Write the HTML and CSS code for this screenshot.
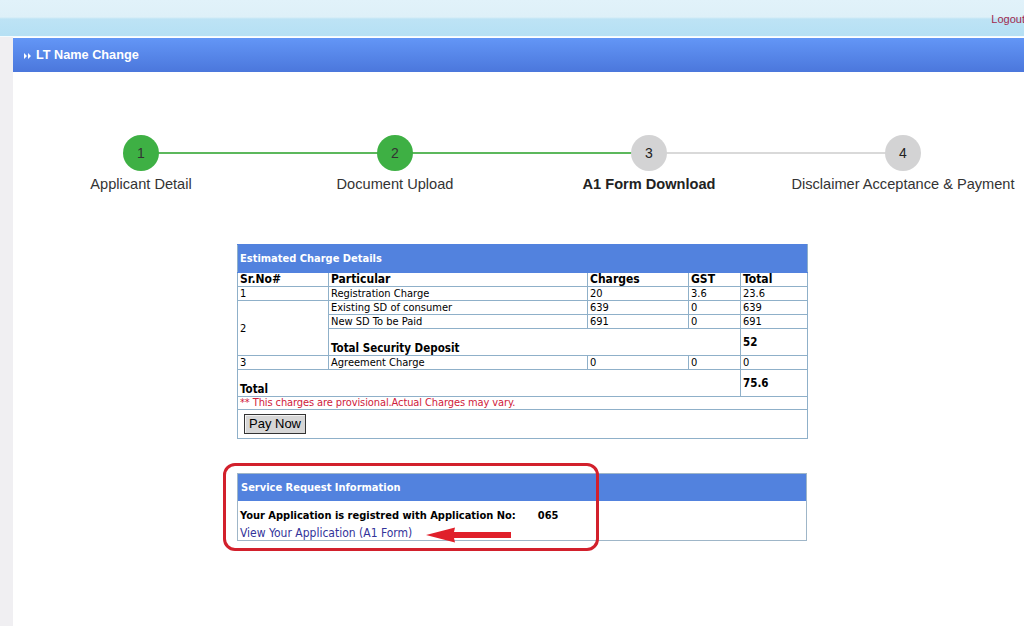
FILE: index.html
```html
<!DOCTYPE html>
<html>
<head>
<meta charset="utf-8">
<link rel="stylesheet" href="styles.css">
</head>
<body>
<div class="topbar"><a class="logout" href="#">Logout</a></div>
<div class="main">
  <div class="sidebar"></div>
  <div class="content">
    <div class="pagehead">
      <svg class="dbl" width="7" height="6" viewBox="0 0 7 6"><path d="M0 0 L3 3 L0 6 Z M4 0 L7 3 L4 6 Z" fill="#fff"/></svg>
      <span>LT Name Change</span>
    </div>
    <div class="stepper">
      <div class="step done line-green"><div class="circle">1</div><div class="label">Applicant Detail</div></div>
      <div class="step done line-green"><div class="circle">2</div><div class="label">Document Upload</div></div>
      <div class="step todo line-gray"><div class="circle">3</div><div class="label current">A1 Form Download</div></div>
      <div class="step todo"><div class="circle">4</div><div class="label">Disclaimer Acceptance &amp; Payment</div></div>
    </div>

    <table class="charges">
      <colgroup><col class="c1"><col class="c2"><col class="c3"><col class="c4"><col class="c5"></colgroup>
      <tr class="cap"><th colspan="5">Estimated Charge Details</th></tr>
      <tr class="hd"><th>Sr.No#</th><th>Particular</th><th>Charges</th><th>GST</th><th>Total</th></tr>
      <tr><td>1</td><td>Registration Charge</td><td>20</td><td>3.6</td><td>23.6</td></tr>
      <tr><td rowspan="3" class="mid">2</td><td>Existing SD of consumer</td><td>639</td><td>0</td><td>639</td></tr>
      <tr><td>New SD To be Paid</td><td>691</td><td>0</td><td>691</td></tr>
      <tr class="tall"><td colspan="3" class="bot"><b>Total Security Deposit</b></td><td class="mid"><b>52</b></td></tr>
      <tr><td>3</td><td>Agreement Charge</td><td>0</td><td>0</td><td>0</td></tr>
      <tr class="tall"><td colspan="4" class="bot"><b>Total</b></td><td class="mid"><b>75.6</b></td></tr>
      <tr><td colspan="5" class="note">** This charges are provisional.Actual Charges may vary.</td></tr>
      <tr class="btnrow"><td colspan="5"><button class="pay">Pay Now</button></td></tr>
    </table>

    <div class="srwrap">
      <div class="srpanel">
        <div class="srhead">Service Request Information</div>
        <div class="srbody">
          <div class="srline"><b>Your Application is registred with Application No:</b><b class="appno">065</b></div>
          <a class="viewlink" href="#">View Your Application (A1 Form)</a>
        </div>
      </div>
      <div class="highlight"></div>
      <svg class="arrow" width="88" height="18" viewBox="0 0 88 18"><path d="M1 9 L30 1.5 L29 6 L86 6 L86 12 L29 12 L30 16.5 Z" fill="#e0202a"/></svg>
    </div>
  </div>
</div>
</body>
</html>
```

FILE: styles.css
```css
html, body { margin: 0; padding: 0; background: #fff; }
body { font-family: "Liberation Sans", Arial, sans-serif; width: 1024px; height: 626px; overflow: hidden; }

.topbar {
  height: 36px;
  background: linear-gradient(#e1f2fa 0, #def0f8 17px, #bde3f5 19px, #b6e0f4 35px);
  border-bottom: 1px solid #f4fbfe;
  display: flex;
  justify-content: flex-end;
  align-items: flex-start;
}
.logout {
  color: #a2294d;
  font-size: 11px;
  text-decoration: none;
  margin-top: 13px;
  margin-right: -1px;
}

.main { display: flex; height: 589px; }
.sidebar { width: 13px; background: #f0eff2; flex: none; }
.content { flex: 1; padding-top: 1px; }

.pagehead {
  height: 34px;
  background: linear-gradient(#6396f6, #4b77dc);
  display: flex;
  align-items: center;
  color: #fff;
  font-weight: bold;
  font-size: 12.7px;
  padding-left: 11px;
  gap: 5px;
}
.pagehead .dbl { margin-top: 1px; }

.stepper {
  display: grid;
  grid-template-columns: repeat(4, 254px);
  margin-left: 1px;
  margin-top: 63px;
}
.step { position: relative; display: flex; flex-direction: column; align-items: center; }
.step::after {
  content: "";
  position: absolute;
  left: 50%;
  width: 254px;
  top: 17px;
  height: 2px;
  z-index: 0;
}
.step.line-green::after { background: #5cb85c; }
.step.line-gray::after { background: #d9d9d9; }
.step:last-child::after { display: none; }
.circle {
  position: relative;
  z-index: 1;
  width: 36px;
  height: 36px;
  border-radius: 50%;
  display: flex;
  align-items: center;
  justify-content: center;
  font-size: 14px;
  color: #333;
}
.done .circle { background: #3eb044; }
.todo .circle { background: #d3d3d4; color: #222; }
.label {
  margin-top: 5px;
  font-size: 14.6px;
  color: #333;
  white-space: nowrap;
}
.label.current { font-weight: bold; color: #222; }

.charges {
  margin-left: 224px;
  margin-top: 52px;
  width: 570px;
  border-collapse: collapse;
  border: 1px solid #8fb0c9;
  font-family: "DejaVu Sans Condensed", "DejaVu Sans", sans-serif;
  font-size: 11px;
  color: #000;
  table-layout: fixed;
}
.charges col.c1 { width: 91px; }
.charges col.c2 { width: 259px; }
.charges col.c3 { width: 101px; }
.charges col.c4 { width: 52px; }
.charges col.c5 { width: 67px; }
.charges td, .charges th {
  border: 1px solid #8fb0c9;
  padding: 0 2px;
  height: 13px;
  line-height: 13px;
  text-align: left;
  vertical-align: top;
  white-space: nowrap;
}
.charges tr.cap th {
  background: #5282de;
  color: #fff;
  height: 27px;
  font-size: 11px;
  vertical-align: middle;
  border-color: #5282de #8fb0c9;
}
.charges tr.hd th { font-size: 12px; font-weight: bold; }
.charges td.mid { vertical-align: middle; }
.charges td.bot { vertical-align: bottom; }
.charges tr.tall td { height: 26px; }
.charges td b { font-size: 11.5px; }
.charges td.note { color: #d0203a; height: 12px; line-height: 12px; letter-spacing: -0.1px; }
.charges tr.btnrow td { height: 28px; vertical-align: middle; padding-left: 6px; }
.pay {
  font-family: "Liberation Sans", Arial, sans-serif;
  font-size: 13px;
  color: #000;
  background: #d6d6d6;
  border: 1px solid #333;
  box-shadow: inset 1px 1px 0 #f4f4f4;
  height: 20px;
  width: 62px;
  padding: 0;
  line-height: 18px;
}

.srwrap { position: relative; margin-left: 224px; margin-top: 34px; width: 570px; }
.srpanel {
  border: 1px solid #9fb6c8;
  font-family: "DejaVu Sans Condensed", "DejaVu Sans", sans-serif;
  font-size: 11px;
}
.srhead {
  background: #5282de;
  color: #fff;
  font-weight: bold;
  height: 27px;
  line-height: 28px;
  padding-left: 3px;
}
.srbody { padding: 7px 2px 0 2px; height: 32px; }
.srline { font-size: 11px; line-height: 16px; }
.appno { margin-left: 22px; }
.viewlink {
  display: block;
  color: #33339a;
  text-decoration: none;
  font-size: 12px;
  line-height: 18px;
}
.highlight {
  position: absolute;
  left: -14px;
  top: -10px;
  width: 370px;
  height: 82px;
  border: 3px solid #d2202c;
  border-radius: 12px;
}
.arrow { position: absolute; left: 188px; top: 53px; }
```
